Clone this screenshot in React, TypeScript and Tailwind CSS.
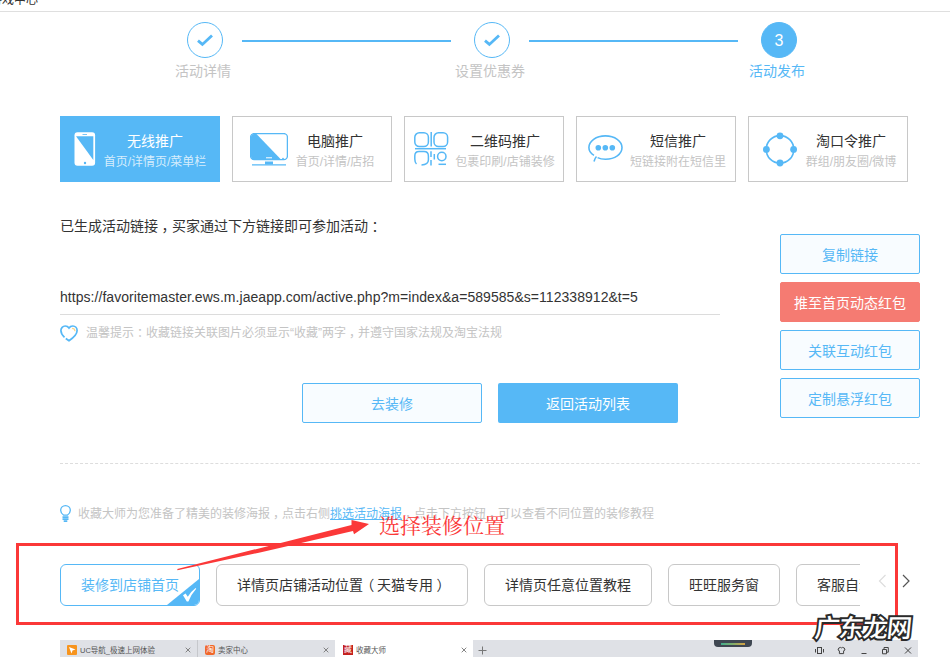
import type { ReactNode } from 'react';
import clsx from 'clsx';

interface Step {
  label: string;
  done: boolean;
}

interface PromoCard {
  title: string;
  desc: string;
  icon: ReactNode;
  iconBox: string;
  textBox: string;
  active?: boolean;
}

const steps: Step[] = [
  { label: '活动详情', done: true },
  { label: '设置优惠券', done: true },
  { label: '活动发布', done: false },
];

const PhoneIcon = () => (
  <svg width="22" height="34" viewBox="0 0 22 34">
    <rect x="0.5" y="0.2" width="20.6" height="33.5" rx="3" fill="#fff" />
    <path d="M2 4.2 L19.3 28 V4.2 Z" fill="#56b8f6" />
    <path d="M8.5 2.5 H13" stroke="#56b8f6" strokeWidth="0.8" />
    <circle cx="11" cy="31" r="1.2" fill="#56b8f6" />
  </svg>
);

const MonitorIcon = () => (
  <svg width="38" height="33" viewBox="0 0 38 33" fill="none">
    <rect x="0.6" y="0.6" width="36.8" height="26" rx="3.5" stroke="#56b8f6" strokeWidth="1.3" />
    <path d="M6.5 1 H4 Q1 1 1 4 V23 Q1 26.5 4 26.5 H31 Z" fill="#56b8f6" />
    <path d="M16 24.8 H22" stroke="#fff" />
    <path d="M15 28.5 H23 V31.5 H15 Z" fill="#56b8f6" />
    <path d="M2 31.9 H36" stroke="#56b8f6" strokeWidth="1.4" />
    <circle cx="33" cy="25.6" r="0.9" fill="#56b8f6" />
  </svg>
);

const QrIcon = () => (
  <svg width="35" height="34" viewBox="0 0 35 34" fill="none" stroke="#56b8f6" strokeWidth="1.5">
    <rect x="0.8" y="0.8" width="13.6" height="13.8" rx="4.5" />
    <path d="M17.2 0 V14.5" />
    <rect x="20" y="0.8" width="13.6" height="13.8" rx="4.5" />
    <path d="M1 16.7 H32" />
    <path d="M2.5 32 Q0.8 30.5 0.8 27 V24 Q0.8 19.6 5 19.6 H10 Q14.4 19.6 14.4 24 V28 Q14.4 32.6 7.5 33" />
    <path d="M17 19.2 V25 M17 28 V33.5 M20.3 22 V27.5" />
    <circle cx="27.8" cy="24.5" r="4.2" />
    <path d="M24.5 32.3 H32" />
  </svg>
);

const BubbleIcon = () => (
  <svg width="35" height="28" viewBox="0 0 35 28" fill="none">
    <path
      d="M6 26.5 Q7 23 8.5 21.5 M6 20.4 C2.5 18.5 0.9 15.6 0.9 12.6 C0.9 6.2 8 0.9 17.4 0.9 C26.8 0.9 34 6.2 34 12.6 C34 19.2 27 24.2 17.5 24.2 C14.5 24.2 11.8 23.7 9.6 22.6"
      stroke="#56b8f6"
      strokeWidth="1.6"
    />
    <circle cx="10.3" cy="12.7" r="2.8" fill="#56b8f6" />
    <circle cx="17.3" cy="12.7" r="2.8" fill="#56b8f6" />
    <circle cx="24.3" cy="12.7" r="2.8" fill="#56b8f6" />
  </svg>
);

const CircleIcon = () => (
  <svg width="34" height="35" viewBox="0 0 34 35" fill="#56b8f6">
    <circle cx="17" cy="17.4" r="13.8" fill="none" stroke="#56b8f6" strokeWidth="1.6" />
    <circle cx="17" cy="3.8" r="3.4" />
    <circle cx="17" cy="31" r="3.4" />
    <circle cx="3.4" cy="17.4" r="3.4" />
    <circle cx="30.6" cy="17.4" r="3.4" />
  </svg>
);

const CheckMark = () => (
  <svg width="18" height="14" viewBox="0 0 18 14" fill="none" stroke="#56b8f6" strokeWidth="2.8">
    <path d="M2 7.6 L6.4 11.4 L16 2.4" />
  </svg>
);

const HeartIcon = () => (
  <svg width="18" height="17" viewBox="0 0 18 17" fill="none" strokeWidth="1.7">
    <path
      d="M4.5 12.4 C2 10 0.9 8 0.9 5.6 C0.9 3 2.8 1 5.2 1 C6.9 1 8.2 1.8 9 3 C9.8 1.8 11.1 1 12.8 1 C15.3 1 17.1 3 17.1 5.6 C17.1 9.5 13.5 12.8 9 15.8 C7.8 15 6.8 14.3 5.8 13.5"
      stroke="#56b8f6"
    />
    <path d="M12 3.3 Q14.8 3.3 15 6.2" stroke="#fbd68a" strokeWidth="1.2" />
  </svg>
);

const BulbIcon = () => (
  <svg width="11" height="18" viewBox="0 0 11 18" fill="none" stroke="#56b8f6" strokeWidth="1.3">
    <path d="M3.7 10.2 C1.7 8.8 0.7 7.4 0.7 5.4 C0.7 2.7 2.8 0.7 5.5 0.7 C8.2 0.7 10.3 2.7 10.3 5.4 C10.3 7.4 9.3 8.8 7.3 10.2 Z" />
    <path d="M2.5 12.2 H8.5 M2.5 14.2 H8.5 M3.7 16.2 H7.3" strokeWidth="1.7" />
  </svg>
);

const cards: PromoCard[] = [
  { title: '无线推广', desc: '首页/详情页/菜单栏', icon: <PhoneIcon />, iconBox: 'pl-[13px] w-[42px]', textBox: 'w-[104px]', active: true },
  { title: '电脑推广', desc: '首页/详情/店招', icon: <MonitorIcon />, iconBox: 'pl-[17px] w-[62px]', textBox: 'w-[80px]' },
  { title: '二维码推广', desc: '包裹印刷/店铺装修', icon: <QrIcon />, iconBox: 'pl-[9px] w-[50px]', textBox: 'w-[100px]' },
  { title: '短信推广', desc: '短链接附在短信里', icon: <BubbleIcon />, iconBox: 'pl-[11px] w-[51px]', textBox: 'w-[100px]' },
  { title: '淘口令推广', desc: '群组/朋友圈/微博', icon: <CircleIcon />, iconBox: 'pl-[14px] w-[56px]', textBox: 'w-[92px]' },
];

const sideButtons = [
  { text: '复制链接' },
  { text: '推至首页动态红包', hot: true },
  { text: '关联互动红包' },
  { text: '定制悬浮红包' },
];

const positions = ['装修到店铺首页', '详情页店铺活动位置（天猫专用）', '详情页任意位置教程', '旺旺服务窗', '客服自动回复'];

// full-width punctuation sits in the middle of its cell
const Cn = ({ children }: { children: string }) => (
  <>
    {children.split(/([，：（）])/).map((part, i) =>
      i % 2 ? (
        <span key={i} className={clsx('relative', part === '（' ? '-left-[0.2em]' : 'left-[0.25em]')}>
          {part}
        </span>
      ) : (
        part
      )
    )}
  </>
);

const StepBar = () => (
  <div className="flex pt-[10px] pl-[175px]">
    {steps.map((step, i) => (
      <div key={step.label} className="flex w-[287px] shrink-0">
        <div className="flex w-[60px] flex-col items-center">
          <div
            className={clsx(
              'flex size-9 items-center justify-center rounded-full border border-[#56b8f6]',
              step.done ? 'bg-white' : 'bg-[#56b8f6] pt-0.5 text-base text-white'
            )}
          >
            {step.done ? <CheckMark /> : i + 1}
          </div>
          <span
            className={clsx(
              'mt-[3px] -ml-1 text-sm leading-5 whitespace-nowrap',
              step.done ? 'text-[#c4c4c4]' : 'text-[#56b8f6]'
            )}
          >
            {step.label}
          </span>
        </div>
        {i < steps.length - 1 && <div className="mt-[18px] ml-[7px] h-0.5 w-[209px] bg-[#56b8f6]" />}
      </div>
    ))}
  </div>
);

const Card = ({ card }: { card: PromoCard }) => (
  <div
    className={clsx(
      'flex h-[66px] w-40 items-center border',
      card.active ? 'border-[#56b8f6] bg-[#56b8f6]' : 'border-[#c8c8c8] bg-white'
    )}
  >
    <div className={clsx('shrink-0', card.iconBox)}>{card.icon}</div>
    <div className={clsx('flex flex-col items-center pt-1.5 whitespace-nowrap', card.textBox)}>
      <span className={clsx('text-sm leading-5', card.active ? 'text-white' : 'text-[#333]')}>{card.title}</span>
      <span className={clsx('text-xs leading-[22px]', card.active ? 'text-[#d5edfd]' : 'text-[#c4c4c4]')}>{card.desc}</span>
    </div>
  </div>
);

const CloseMark = () => (
  <svg width="6" height="6" viewBox="0 0 6 6" stroke="#777" strokeWidth="0.9">
    <path d="M0.7 0.7 L5.3 5.3 M5.3 0.7 L0.7 5.3" />
  </svg>
);

const BrowserBar = () => (
  <div className="ml-[60px] flex h-[17px] w-[858px] items-center overflow-hidden bg-[#dfe1e6] text-[7.5px] leading-[17px] text-[#555]">
    <div className="flex h-full w-[138px] items-center border-r border-[#c6c8cc] pt-[3px] pr-[6px] pl-[7px]">
      <svg width="10" height="10" viewBox="0 0 10 10">
        <rect width="10" height="10" rx="1" fill="#f7941d" />
        <path d="M2 2 L8.5 4.5 L5.5 5.5 L4.5 8.5 Z" fill="#fff" />
      </svg>
      <span className="ml-[3px] flex-1">UC导航_极速上网体验</span>
      <CloseMark />
    </div>
    <div className="flex h-full w-[137px] items-center pt-[3px] pr-[6px] pl-[7px]">
      <span className="flex size-[10px] items-center justify-center rounded-[2px] bg-[#f0672b] text-[8px] leading-none text-white">淘</span>
      <span className="ml-[3px] flex-1">卖家中心</span>
      <CloseMark />
    </div>
    <div className="flex h-full w-[138px] items-center bg-white pt-[3px] pr-[6px] pl-2">
      <span className="flex size-[10px] items-center justify-center bg-[#c4201d] text-[8px] leading-none text-white">藏</span>
      <span className="ml-[3px] flex-1">收藏大师</span>
      <CloseMark />
    </div>
    <svg className="mt-[3px] ml-[5px]" width="9" height="9" viewBox="0 0 9 9" stroke="#777">
      <path d="M4.5 0.5 V8.5 M0.5 4.5 H8.5" />
    </svg>
    <div className="ml-[227px] flex h-[7px] w-[38px] items-center justify-center self-start rounded-b-sm bg-[#3f4752]">
      <div className="h-[2px] w-[24px] bg-linear-to-r from-[#3fae8d] via-[#7fae6a] to-[#d5a03f]" />
    </div>
    <svg className="mt-1 ml-[62px]" width="99" height="12" viewBox="0 0 99 12" fill="none" stroke="#444" strokeWidth="1">
      <rect x="3.5" y="2.5" width="4" height="6" />
      <path d="M1.5 4 V7.5 M9.5 4 V7.5" />
      <path d="M24.8 3 L26.5 2.4 Q27.5 3.4 28.5 2.4 L30.3 3 L31 5 L29.6 5.8 V8.6 H25.4 V5.8 L24 5 Z" />
      <path d="M47.5 8.5 H52.5" />
      <path d="M68.5 4.5 H72.5 V8.8 H68.5 Z M70 4.5 V2.5 H74.3 V7.2 H72.5" />
      <path d="M91 2.5 L97 8.5 M97 2.5 L91 8.5" />
    </svg>
  </div>
);

export default function App() {
  return (
    <div className="relative h-[657px] w-[950px] overflow-hidden bg-white font-['Liberation_Sans','Noto_Sans_CJK_SC',sans-serif] text-[#333]">
      <div className="flex h-3 items-end overflow-hidden border-b border-[#dfdfdf]">
        <span className="mb-[4px] -ml-[10px] text-xs leading-[14px]">游戏中心</span>
      </div>

      <StepBar />

      <div className="mt-[35px] ml-[60px] flex gap-3">
        {cards.map((card) => (
          <Card key={card.title} card={card} />
        ))}
      </div>

      <div className="ml-[60px] flex h-[282px] w-[860px] justify-between border-b border-dashed border-[#ddd]">
        <div className="w-[660px]">
          <p className="mt-[34px] h-5 text-sm leading-5">
            <Cn>已生成活动链接，买家通过下方链接即可参加活动：</Cn>
          </p>
          <p className="mt-[50px] h-[29px] border-b border-[#dcdcdc] text-sm leading-[22px] tracking-[0.045px]">
            https://favoritemaster.ews.m.jaeapp.com/active.php?m=index&amp;a=589585&amp;s=112338912&amp;t=5
          </p>
          <div className="mt-[9px] flex h-[18px] items-center text-xs text-[#c4c4c4]">
            <HeartIcon />
            <span className="ml-2">
              <Cn>温馨提示：收藏链接关联图片必须显示“收藏”两字，并遵守国家法规及淘宝法规</Cn>
            </span>
          </div>
          <div className="mt-[41px] ml-[242px] flex gap-4 text-sm">
            <button className="h-10 w-[180px] rounded-xs border border-[#56b8f6] bg-[#f8fcff] pt-0.5 text-[#56b8f6]">去装修</button>
            <button className="h-10 w-[180px] rounded-xs bg-[#56b8f6] pt-0.5 text-white">返回活动列表</button>
          </div>
        </div>
        <div className="mt-[52px] flex flex-col gap-2 text-sm">
          {sideButtons.map((btn) => (
            <button
              key={btn.text}
              className={clsx(
                'h-10 w-[140px] rounded-xs border pt-0.5',
                btn.hot ? 'border-[#f57b72] bg-[#f57b72] text-white' : 'border-[#56b8f6] bg-[#f8fcff] text-[#56b8f6]'
              )}
            >
              {btn.text}
            </button>
          ))}
        </div>
      </div>

      <div className="mt-[41px] ml-[60px] flex h-[18px] items-center text-xs whitespace-nowrap text-[#c4c4c4]">
        <BulbIcon />
        <p className="ml-[7px]">
          <Cn>收藏大师为您准备了精美的装修海报，点击右侧</Cn>
          <a className="text-[#56b8f6] underline">挑选活动海报</a>
          <Cn>，点击下方按钮，可以查看不同位置的装修教程</Cn>
        </p>
      </div>

      <div className="mt-[41px] ml-[60px] flex h-[42px] items-center">
        <div className="flex w-[800px] gap-4 overflow-hidden">
          {positions.map((name, i) => (
            <div
              key={name}
              className={clsx(
                'relative h-[42px] shrink-0 overflow-hidden rounded-md border px-5 text-sm leading-10 whitespace-nowrap',
                i === 0 ? 'border-[#56b8f6] text-[#56b8f6]' : 'border-[#c8c8c8]'
              )}
            >
              <Cn>{name}</Cn>
              {i === 0 && (
                <svg className="absolute right-0 bottom-0" width="32" height="26" viewBox="0 0 32 26">
                  <path d="M32 0 V26 H0 Z" fill="#56b8f6" />
                  <path d="M16 16.2 L18.6 14.6 L20.8 17.8 Q23.8 12.5 28.6 9 L29.2 9.8 Q24.5 15 21.4 22.4 H19.8 Z" fill="#fff" />
                </svg>
              )}
            </div>
          ))}
        </div>
        <svg className="mb-2 ml-[18px]" width="34" height="14" viewBox="0 0 34 14" fill="none">
          <path d="M7.5 1 L1.5 7 L7.5 13" stroke="#ddd" strokeWidth="1.2" />
          <path d="M25 1 L31 7 L25 13" stroke="#555" strokeWidth="1.2" />
        </svg>
      </div>

      <div className="mt-[34px]">
        <BrowserBar />
      </div>

      {/* hand-drawn notes on top of the page */}
      <div className="absolute top-[543px] left-[16px] h-[82px] w-[882px] border-3 border-[#fb3838]" />
      <svg className="absolute top-[515px] left-[170px]" width="205" height="60" viewBox="170 515 205 60">
        <path d="M177.3 569 L351.5 525 L351.5 520 L369 524 L354 534.3 L353 531 L260 552.5 L177.5 570.2 Z" fill="#fb3838" />
      </svg>
      <span className="absolute top-[511px] left-[379px] font-['Liberation_Serif','Noto_Serif_CJK_SC','Noto_Sans_CJK_SC',serif] text-[21px] leading-[30px] whitespace-nowrap text-[#fb3838]">
        选择装修位置
      </span>
      <span className="absolute top-[612px] left-[815px] -skew-x-6 text-[25px] leading-[32px] tracking-[-1px] font-medium whitespace-nowrap text-white [-webkit-text-stroke:4px_#2b2b2b] [paint-order:stroke_fill]">
        广东龙网
      </span>
    </div>
  );
}
